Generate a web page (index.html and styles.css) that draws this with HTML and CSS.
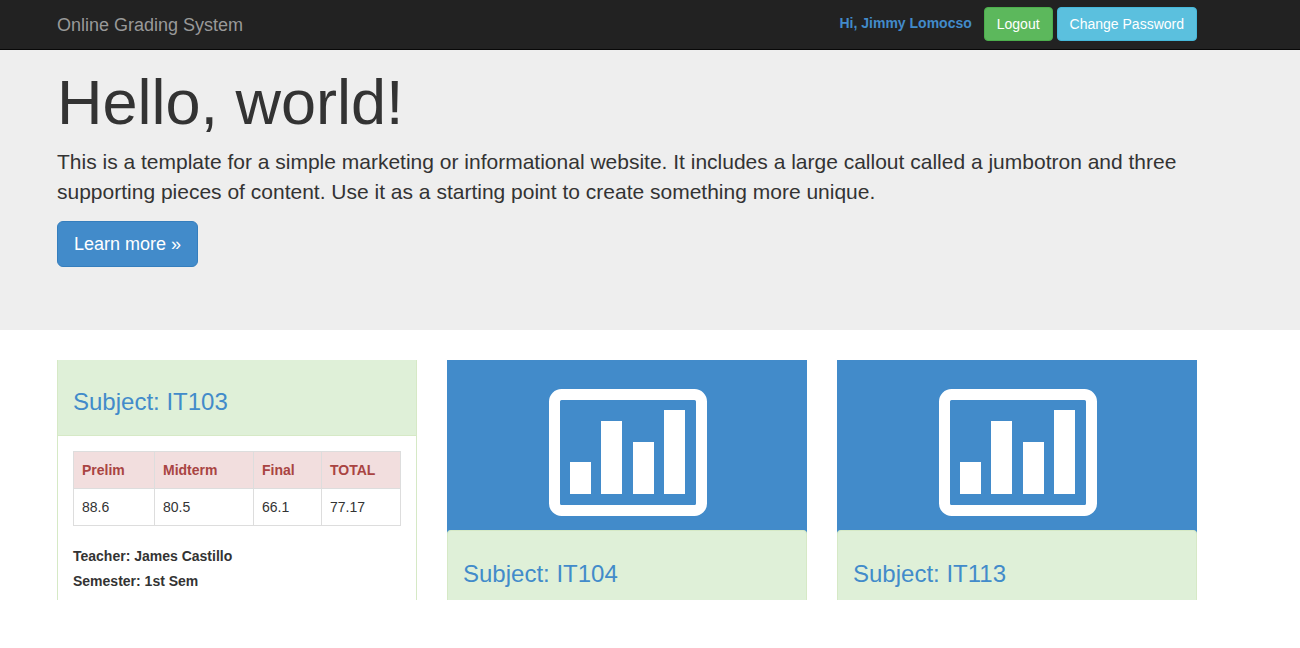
FILE: index.html
```html
<!DOCTYPE html>
<html lang="en">
<head>
<meta charset="utf-8">
<title>Online Grading System</title>
<link rel="stylesheet" href="styles.css">
</head>
<body>
<header class="navbar">
  <div class="container navbar-row">
    <a class="brand" href="#">Online Grading System</a>
    <div class="account">
      <a class="user" href="#">Hi, Jimmy Lomocso</a>
      <button class="btn btn-success" type="button">Logout</button>
      <button class="btn btn-info" type="button">Change Password</button>
    </div>
  </div>
</header>
<main>
  <section class="jumbotron">
    <div class="container">
      <h1 class="headline">Hello, world!</h1>
      <p class="lead">This is a template for a simple marketing or informational website. It includes a large callout called a jumbotron and three supporting pieces of content. Use it as a starting point to create something more unique.</p>
      <a class="btn btn-primary" href="#">Learn more »</a>
    </div>
  </section>
  <section class="container subjects">
    <article class="tile">
      <h3 class="panel-heading"><a href="#">Subject: IT103</a></h3>
      <div class="panel-body">
        <table class="grades">
          <thead>
            <tr><th class="col-prelim">Prelim</th><th class="col-midterm">Midterm</th><th class="col-final">Final</th><th>TOTAL</th></tr>
          </thead>
          <tbody>
            <tr><td>88.6</td><td>80.5</td><td>66.1</td><td>77.17</td></tr>
          </tbody>
        </table>
        <p class="detail">Teacher: James Castillo</p>
        <p class="detail">Semester: 1st Sem</p>
      </div>
    </article>
    <article class="tile tile-cover">
      <div class="cover">
        <svg class="chart" viewBox="0 0 158 127" aria-hidden="true">
          <rect x="5.5" y="5.5" width="147" height="116" rx="7" fill="none" stroke="#fff" stroke-width="11"/>
          <path fill="#fff" d="M21 73h21v32H21zM52 32h21v73H52zM84 53h21v52H84zM115 21h21v84h-21z"/>
        </svg>
      </div>
      <h3 class="panel-heading"><a href="#">Subject: IT104</a></h3>
    </article>
    <article class="tile tile-cover">
      <div class="cover">
        <svg class="chart" viewBox="0 0 158 127" aria-hidden="true">
          <rect x="5.5" y="5.5" width="147" height="116" rx="7" fill="none" stroke="#fff" stroke-width="11"/>
          <path fill="#fff" d="M21 73h21v32H21zM52 32h21v73H52zM84 53h21v52H84zM115 21h21v84h-21z"/>
        </svg>
      </div>
      <h3 class="panel-heading"><a href="#">Subject: IT113</a></h3>
    </article>
  </section>
</main>
</body>
</html>
```
FILE: styles.css
```css
* { box-sizing: border-box; }

body {
  margin: 0;
  background: #fff;
  color: #333;
  font: 14px/20px "Liberation Sans", Arial, sans-serif;
}

a {
  color: #428bca;
  text-decoration: none;
}

.container { padding: 0 103px 0 57px; }

.navbar {
  background: #222;
  border-bottom: 1px solid #080808;
}

.navbar-row {
  display: flex;
  flex-wrap: wrap;
  align-items: center;
  justify-content: space-between;
  min-height: 49px;
}

.brand {
  color: #999;
  font-size: 18px;
}

.account {
  display: flex;
  align-items: flex-start;
  gap: 4px;
  padding: 7px 0 8px;
}

.user {
  margin-right: 8px;
  padding: 6px 0;
  font-weight: bold;
}

.btn {
  display: inline-block;
  padding: 6px 12px;
  border: 1px solid;
  border-radius: 4px;
  color: #fff;
  font: inherit;
  cursor: pointer;
}

.btn-success {
  background: #5cb85c;
  border-color: #4cae4c;
}

.btn-info {
  background: #5bc0de;
  border-color: #46b8da;
}

.btn-primary {
  padding: 10px 16px;
  background: #428bca;
  border-color: #357ebd;
  border-radius: 6px;
  font-size: 18px;
  line-height: 24px;
}

.jumbotron {
  padding: 20px 0 63px;
  background: #eee;
}

.headline {
  margin: 0 0 13px;
  font-size: 63px;
  font-weight: normal;
  line-height: 64px;
}

.lead {
  margin: 0 0 14px;
  font-size: 21px;
  line-height: 30px;
}

.subjects {
  display: grid;
  grid-template-columns: repeat(3, 1fr);
  gap: 30px;
  margin-top: 30px;
}

.tile {
  border: solid #d6e9c6;
  border-width: 0 1px;
}

.tile-cover {
  display: flex;
  flex-direction: column;
  border: 0;
  background: #428bca;
}

.cover {
  display: flex;
  justify-content: center;
  padding: 29px 0 14px 2px;
}

.chart { width: 158px; }

.panel-heading {
  margin: 0;
  padding: 28px 15px 20px;
  background: #dff0d8;
  border-bottom: 1px solid #d6e9c6;
  font-size: 24px;
  font-weight: normal;
  line-height: 27px;
}

.tile-cover .panel-heading {
  flex: 1;
  padding-top: 29px;
  padding-bottom: 0;
  border: 1px solid #d6e9c6;
  border-bottom: 0;
  border-radius: 4px 4px 0 0;
}

.panel-body { padding: 15px 15px 9px; }

.grades {
  width: 100%;
  margin-bottom: 20px;
  border-collapse: collapse;
  table-layout: fixed;
}

.grades th,
.grades td {
  padding: 8px;
  border: 1px solid #ddd;
  text-align: left;
}

.grades th {
  background: #f2dede;
  color: #a94442;
}

.col-prelim { width: 81px; }
.col-midterm { width: 99px; }
.col-final { width: 68px; }

.detail {
  margin: 0 0 5px;
  font-weight: bold;
}

.detail:last-child { margin: 0; }
```
